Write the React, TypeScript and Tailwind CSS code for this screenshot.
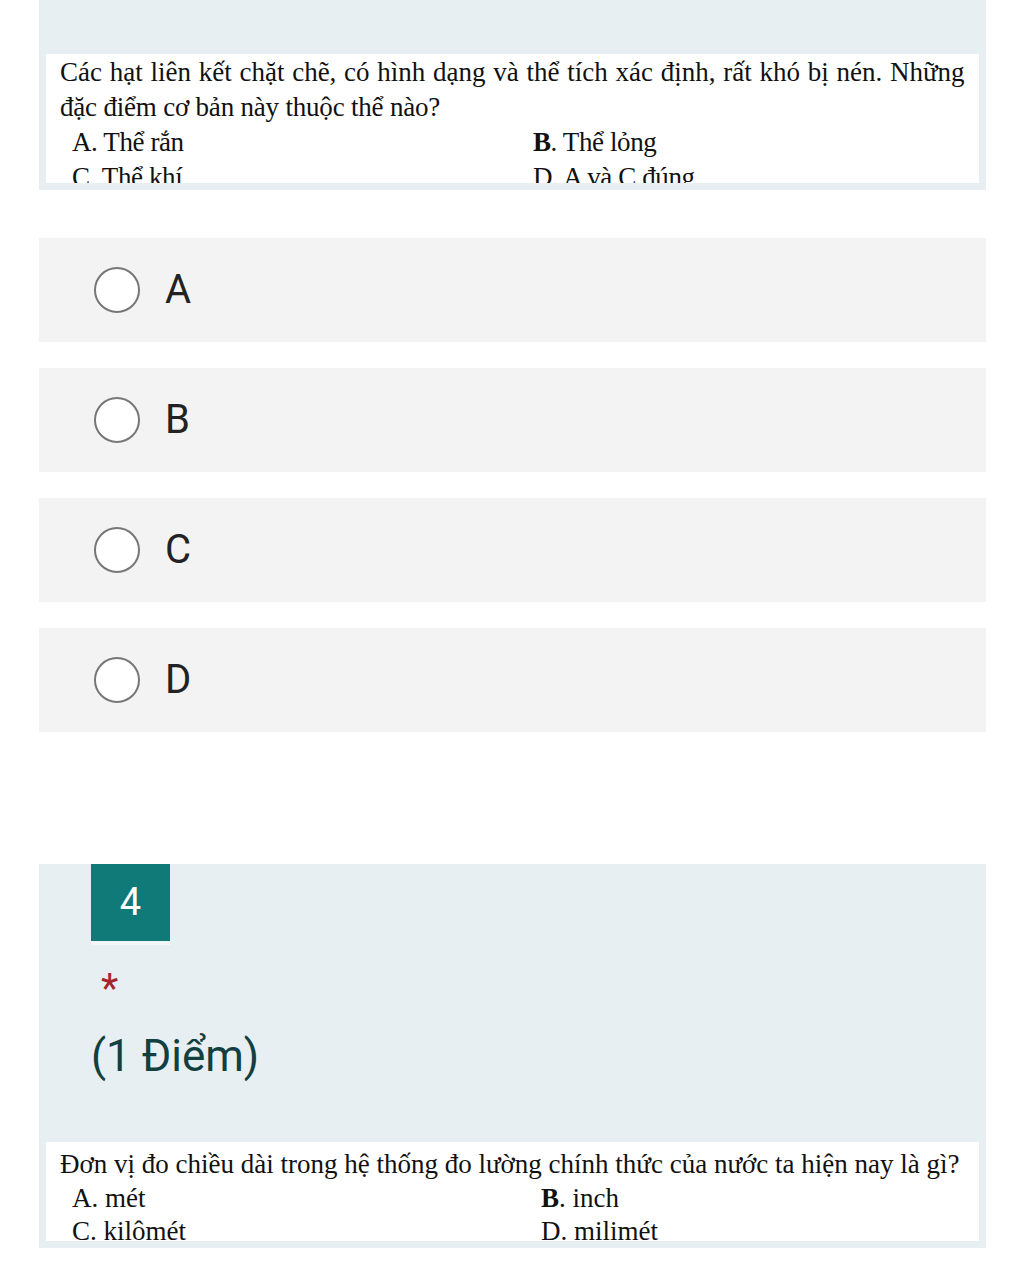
import React from "react";

const serif = { fontFamily: '"Liberation Serif", "Times New Roman", serif' };
const sans = { fontFamily: 'Roboto, "Noto Sans", Arial, sans-serif' };

function Choice({ label }: { label: string }) {
  return (
    <div className="flex h-[104px] items-center bg-[#f3f3f3] pl-[55px]">
      <span className="h-[46px] w-[46px] shrink-0 rounded-full border-[2.5px] border-[#767676] bg-white" />
      <span className="ml-[25px] text-[40px] leading-none text-[#222]" style={sans}>
        {label}
      </span>
    </div>
  );
}

export default function App() {
  return (
    <div className="min-h-[1280px] w-[1024px] bg-white">
      <div className="mx-[39px] w-[947px]">
        {/* câu hỏi trước, ảnh chụp đề */}
        <section className="h-[190px] bg-[#e7eff2] px-[7px] pt-[54px]">
          <div className="h-[129px] overflow-hidden bg-white pl-[14px] pr-[4px] pt-[1px] text-[27px] leading-[35px] text-[#111]" style={serif}>
            <p className="whitespace-nowrap [word-spacing:1px]">
              Các hạt liên kết chặt chẽ, có hình dạng và thể tích xác định, rất khó bị nén. Những
            </p>
            <p className="tracking-[-0.2px]">đặc điểm cơ bản này thuộc thể nào?</p>
            <div className="grid grid-cols-[461px_1fr] pl-[12px] tracking-[-0.4px]">
              <p>A. Thể rắn</p>
              <p>
                <b>B</b>. Thể lỏng
              </p>
              <p>C. Thể khí</p>
              <p>D. A và C đúng</p>
            </div>
          </div>
        </section>

        <div className="mt-[48px] flex flex-col gap-[26px]">
          {["A", "B", "C", "D"].map((l) => (
            <Choice key={l} label={l} />
          ))}
        </div>

        <section className="mt-[132px] h-[384px] bg-[#e7eff2]">
          <div className="ml-[52px] w-[79px] border-b-[4px] border-[#f2f7f8]">
            <div className="flex h-[77px] items-center justify-center bg-[#0f7a78] text-[38px] text-white" style={sans}>
              4
            </div>
          </div>
          <div className="ml-[62px] mt-[24px] h-[40px] text-[40px] leading-[40px] text-[#a4262c]" style={sans}>
            *
          </div>
          <div className="ml-[52px] mt-[21px] text-[44px] leading-[52px] text-[#123f40]" style={sans}>
            (1 Điểm)
          </div>
          <div className="mx-[7px] mt-[60px] h-[99px] overflow-hidden bg-white pl-[14px] text-[27px] leading-[33.5px] text-[#111]" style={serif}>
            <p className="whitespace-nowrap pt-[6px]">
              Đơn vị đo chiều dài trong hệ thống đo lường chính thức của nước ta hiện nay là gì?
            </p>
            <div className="grid grid-cols-[469px_1fr] pl-[12px]">
              <p>A. mét</p>
              <p>
                <b>B</b>. inch
              </p>
              <p>C. kilômét</p>
              <p>D. milimét</p>
            </div>
          </div>
        </section>
      </div>
    </div>
  );
}
